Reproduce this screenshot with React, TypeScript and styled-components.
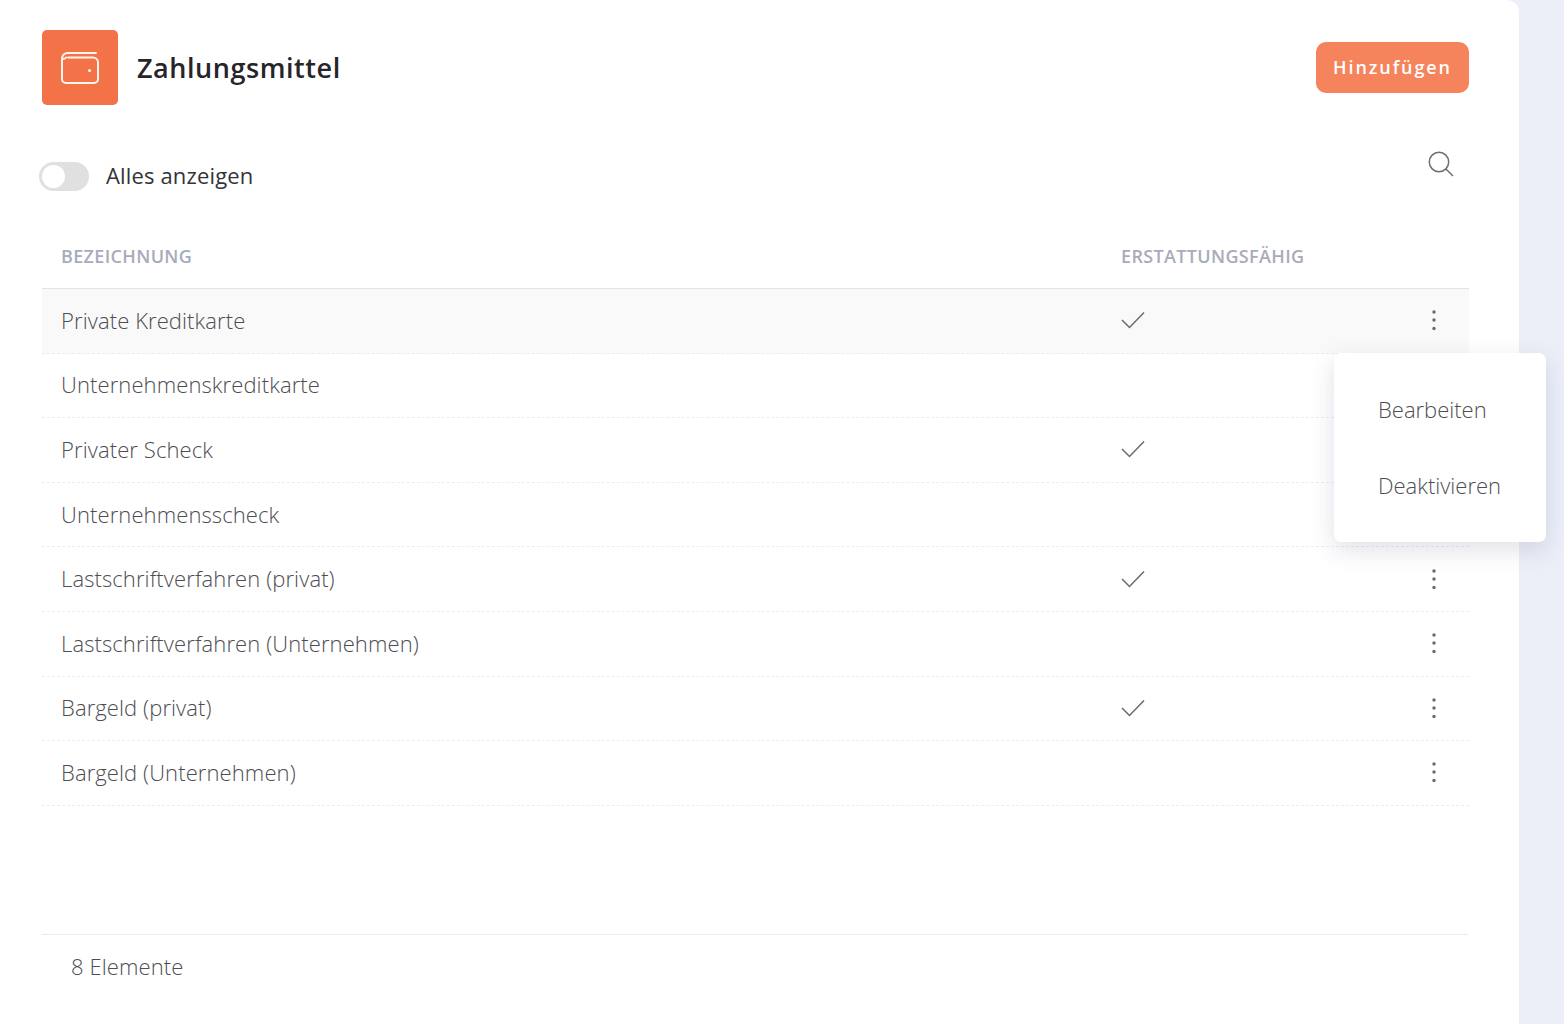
import React from 'react';
import styled, { createGlobalStyle } from 'styled-components';

const GlobalStyle = createGlobalStyle`
  html, body {
    margin: 0;
    padding: 0;
    background-color: #ECEFF8;
    font-family: 'Open Sans', 'Noto Sans', sans-serif;
  }
`;

const Page = styled.div`
  height: 1024px;
  overflow: hidden;
  padding-right: 45px;
`;

const Card = styled.main`
  position: relative;
  display: flex;
  flex-direction: column;
  height: 1024px;
  box-sizing: border-box;
  padding: 30px 50px 0 42px;
  background-color: #ffffff;
  border-top-right-radius: 12px;
`;

const Header = styled.header`
  display: flex;
  align-items: center;
  justify-content: space-between;
`;

const TitleGroup = styled.div`
  display: flex;
  align-items: center;
  gap: 19px;
`;

const IconTile = styled.div`
  display: flex;
  align-items: center;
  justify-content: center;
  width: 76px;
  height: 75px;
  background-color: #F47248;
  border-radius: 5px;
`;

const Title = styled.h1`
  margin: 0;
  color: #25252A;
  font-size: 27px;
  font-weight: 600;
  letter-spacing: 0.55px;
`;

const AddButton = styled.button`
  width: 153px;
  height: 51px;
  padding: 0;
  margin-top: -1px;
  border: none;
  border-radius: 10px;
  background-color: #F5835C;
  color: #ffffff;
  font-family: inherit;
  font-size: 18px;
  font-weight: 600;
  letter-spacing: 1.9px;
`;

const Toolbar = styled.div`
  display: flex;
  align-items: flex-start;
  justify-content: space-between;
  margin-top: 46px;
  padding-right: 15px;
  height: 60px;
`;

const ToggleLabel = styled.label`
  display: flex;
  align-items: center;
  gap: 17px;
  margin: 9px 0 0 -3px;
`;

const ToggleText = styled.span`
  margin-bottom: 2px;
  color: #333338;
  font-size: 22px;
  font-weight: 400;
  letter-spacing: 0.15px;
`;

const ToggleTrack = styled.span`
  display: flex;
  align-items: center;
  width: 50px;
  height: 29px;
  box-sizing: border-box;
  padding-left: 3px;
  background-color: #E0E0E0;
  border-radius: 15px;
`;

const ToggleKnob = styled.span`
  width: 23px;
  height: 23px;
  background-color: #ffffff;
  border-radius: 50%;
`;

const SearchButton = styled.span`
  display: block;
  width: 26px;
  height: 26px;
`;

const HeadRow = styled.div`
  display: grid;
  grid-template-columns: 1060px 1fr;
  align-items: center;
  height: 54px;
  margin-top: 24px;
  padding: 0 19px 11px;
  border-bottom: 1px solid #E3E3E6;
  box-sizing: border-box;
`;

const HeadCell = styled.span`
  color: #A9ABBB;
  font-size: 18px;
  font-weight: 600;
  letter-spacing: 0.35px;
`;

const Row = styled.div<{ $active?: boolean }>`
  display: grid;
  grid-template-columns: 1060px 1fr 32px;
  align-items: center;
  height: 64.6px;
  box-sizing: border-box;
  padding: 0 19px 2px;
  background-color: ${(p) => (p.$active ? '#F9F9F9' : 'transparent')};
  border-bottom: 1px dashed #EDEDF0;
`;

const RowName = styled.span`
  color: #4D4D52;
  font-size: 22px;
  font-weight: 300;
  letter-spacing: 0.1px;
`;

const CheckCell = styled.span`
  display: flex;
  align-items: center;
  margin-top: 1px;
`;

const MoreButton = styled.span`
  display: flex;
  justify-content: center;
  margin-top: 1px;
`;

const Footer = styled.footer`
  margin-top: 128.2px;
  margin-right: 1px;
  height: 62px;
  display: flex;
  align-items: center;
  padding-left: 29px;
  border-top: 1px solid #EBEBED;
  color: #4D4D52;
  font-size: 22px;
  font-weight: 300;
  letter-spacing: 0.1px;
`;

const Menu = styled.div`
  position: absolute;
  top: 353px;
  left: 1334px;
  display: flex;
  flex-direction: column;
  gap: 46px;
  width: 212px;
  height: 189px;
  box-sizing: border-box;
  padding: 41px 0 0 44px;
  background-color: #ffffff;
  border-radius: 7px;
  box-shadow: 0 8px 24px rgba(60, 70, 110, 0.16);
`;

const MenuItem = styled.span`
  color: #4D4D52;
  font-size: 22px;
  line-height: 30px;
  font-weight: 300;
`;

const WalletIcon = () => (
  <svg width="40" height="34" viewBox="0 0 40 34" fill="none" stroke="#FFF3EE" strokeWidth="2" strokeLinecap="round">
    <path d="M8 2h28" />
    <path d="M8 6.5h25a5 5 0 0 1 5 5V28a4 4 0 0 1-4 4H6a4 4 0 0 1-4-4V7.5a5.5 5.5 0 0 1 6-5.5" />
    <path d="M2 8a4 4 0 0 0 4 -1.5" />
    <circle cx="29.5" cy="19.5" r="1.6" fill="#FFF3EE" stroke="none" />
  </svg>
);

const SearchIcon = () => (
  <svg width="26" height="26" viewBox="0 0 26 26" fill="none" stroke="#6F6F73" strokeWidth="1.5">
    <circle cx="11" cy="11" r="9.7" />
    <path d="M18 18l7 7" />
  </svg>
);

const CheckIcon = () => (
  <svg width="24" height="18" viewBox="0 0 24 18" fill="none" stroke="#6A6A6E" strokeWidth="1.5">
    <path d="M1 9l7.5 7.5L23 1.5" />
  </svg>
);

const KebabIcon = () => (
  <svg width="6" height="22" viewBox="0 0 6 22" fill="#6A6A6E">
    <circle cx="3" cy="3" r="1.7" />
    <circle cx="3" cy="11" r="1.7" />
    <circle cx="3" cy="19.5" r="1.7" />
  </svg>
);

const methods = [
  { name: 'Private Kreditkarte', refundable: true },
  { name: 'Unternehmenskreditkarte', refundable: false },
  { name: 'Privater Scheck', refundable: true },
  { name: 'Unternehmensscheck', refundable: false },
  { name: 'Lastschriftverfahren (privat)', refundable: true },
  { name: 'Lastschriftverfahren (Unternehmen)', refundable: false },
  { name: 'Bargeld (privat)', refundable: true },
  { name: 'Bargeld (Unternehmen)', refundable: false },
];

export default function App() {
  return (
    <Page>
      <GlobalStyle />
      <Card>
        <Header>
          <TitleGroup>
            <IconTile>
              <WalletIcon />
            </IconTile>
            <Title>Zahlungsmittel</Title>
          </TitleGroup>
          <AddButton>Hinzufügen</AddButton>
        </Header>

        <Toolbar>
          <ToggleLabel>
            <ToggleTrack>
              <ToggleKnob />
            </ToggleTrack>
            <ToggleText>Alles anzeigen</ToggleText>
          </ToggleLabel>
          <SearchButton>
            <SearchIcon />
          </SearchButton>
        </Toolbar>

        <HeadRow>
          <HeadCell>BEZEICHNUNG</HeadCell>
          <HeadCell>ERSTATTUNGSFÄHIG</HeadCell>
        </HeadRow>

        {methods.map((method, index) => (
          <Row key={method.name} $active={index === 0}>
            <RowName>{method.name}</RowName>
            <CheckCell>{method.refundable && <CheckIcon />}</CheckCell>
            <MoreButton>
              <KebabIcon />
            </MoreButton>
          </Row>
        ))}

        <Footer>8 Elemente</Footer>

        <Menu>
          <MenuItem>Bearbeiten</MenuItem>
          <MenuItem>Deaktivieren</MenuItem>
        </Menu>
      </Card>
    </Page>
  );
}
